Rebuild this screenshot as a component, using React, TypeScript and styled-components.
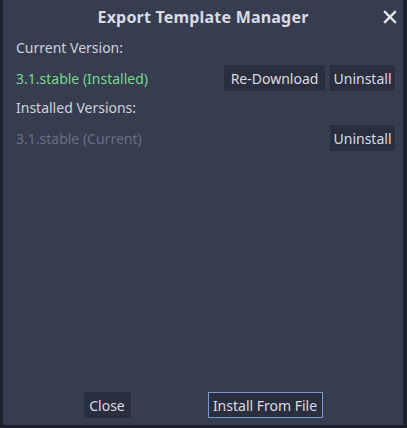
import React from "react";
import styled, { createGlobalStyle } from "styled-components";

const GlobalStyle = createGlobalStyle`
  html, body {
    margin: 0;
    padding: 0;
    background: #1c202b;
    font-family: "Noto Sans", "Open Sans", sans-serif;
  }
`;

type Version = { name: string; current: boolean };

const installed: Version[] = [{ name: "3.1.stable", current: true }];

export default function App() {
  return (
    <>
      <GlobalStyle />
      <WindowLayout>
        <TitleBar>
          <span />
          <Title>Export Template Manager</Title>
          <CloseIcon aria-label="close">
            <svg width="14" height="14" viewBox="0 0 14 14">
              <path d="M2 2 L12 12 M12 2 L2 12" stroke="#e6e8ee" strokeWidth="2.4" strokeLinecap="square" />
            </svg>
          </CloseIcon>
        </TitleBar>

        <Content>
          <Label>Current Version:</Label>
          <Row>
            <VersionText $tone="ok">3.1.stable (Installed)</VersionText>
            <Actions>
              <Button $width={101}>Re-Download</Button>
              <Button $width={65}>Uninstall</Button>
            </Actions>
          </Row>

          <Label>Installed Versions:</Label>
          {installed.map((v) => (
            <Row key={v.name}>
              <VersionText $tone="muted">
                {v.name} {v.current ? "(Current)" : ""}
              </VersionText>
              <Actions>
                <Button $width={65}>Uninstall</Button>
              </Actions>
            </Row>
          ))}
        </Content>

        <Footer>
          <Button $width={47}>Close</Button>
          <Button $width={115} $focused>
            Install From File
          </Button>
        </Footer>
      </WindowLayout>
    </>
  );
}

const WindowLayout = styled.div`
  width: 400px;
  height: 425px;
  margin-left: 3px;
  background-color: #363d51;
  display: flex;
  flex-direction: column;
  color: #d8dbe2;
`;

const TitleBar = styled.div`
  height: 33px;
  display: grid;
  grid-template-columns: 1fr auto 1fr;
  align-items: center;
`;

const Title = styled.div`
  font-size: 16px;
  font-weight: 700;
  color: #d9dbe1;
  letter-spacing: 0.2px;
`;

const CloseIcon = styled.div`
  justify-self: end;
  margin-right: 6px;
  display: flex;
  align-items: center;
  cursor: pointer;
`;

const Content = styled.div`
  flex: 1;
  padding: 0 8px 0 13px;
  display: flex;
  flex-direction: column;
`;

const Label = styled.div`
  font-size: 14px;
  height: 30px;
  line-height: 30px;
  color: #d0d3da;
`;

const Row = styled.div`
  display: flex;
  align-items: center;
  justify-content: space-between;
  height: 30px;
`;

const VersionText = styled.div<{ $tone: "ok" | "muted" }>`
  font-size: 14px;
  color: ${(p) => (p.$tone === "ok" ? "#7ad68c" : "#6b7180")};
`;

const Actions = styled.div`
  display: flex;
  gap: 5px;
`;

const Button = styled.button<{ $focused?: boolean; $width?: number }>`
  font-family: inherit;
  font-size: 14px;
  color: #d9dbe1;
  background-color: #2a2f40;
  border: 1px solid ${(p) => (p.$focused ? "#7a9bd0" : "#2a2f40")};
  border-radius: 0;
  height: 26px;
  width: ${(p) => (p.$width ? `${p.$width}px` : "auto")};
  padding: 0;
  white-space: nowrap;
  cursor: pointer;
`;

const Footer = styled.div`
  display: flex;
  justify-content: center;
  gap: 77px;
  padding-bottom: 7px;
`;
